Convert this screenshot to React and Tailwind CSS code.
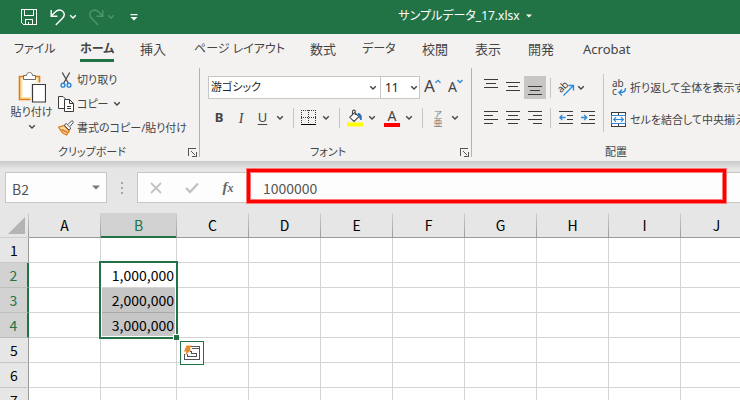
import React from "react";

const TABS = ["ファイル", "ホーム", "挿入", "ページ レイアウト", "数式", "データ", "校閲", "表示", "開発", "Acrobat"];
const KANA_TABS = ["ファイル", "ホーム", "ページ レイアウト", "データ"];
const COLUMNS = ["A", "B", "C", "D", "E", "F", "G", "H", "I", "J"];
const ROWS = [1, 2, 3, 4, 5, 6, 7];
const VALUES = { 2: "1,000,000", 3: "2,000,000", 4: "3,000,000" };

function Chevron({ className = "" }) {
  return (
    <svg className={className} width="8" height="6" viewBox="0 0 8 6" fill="none" stroke="currentColor" strokeWidth="1.4">
      <path d="M1.2 1.3 L4 4 L6.8 1.3" />
    </svg>
  );
}

function ChevronButton({ label, className = "w-3.5" }) {
  return (
    <button aria-label={label} className={`flex h-5 shrink-0 items-center justify-center ${className}`}>
      <Chevron />
    </button>
  );
}

function Launcher({ label }) {
  return (
    <button aria-label={label} className="absolute right-[3px] bottom-1">
      <svg width="9" height="9" viewBox="0 0 9 9" fill="none" stroke="#555" shapeRendering="crispEdges">
        <path d="M0.5 8 V0.5 H8" />
        <path d="M3 3 L7.5 7.5 M8.5 4 V8.5 H4" />
      </svg>
    </button>
  );
}

function Separator() {
  return <span className="mr-[5px] ml-1.5 h-5 w-px shrink-0 bg-[#c8c6c4]" />;
}

function Lines({ rows }) {
  return (
    <svg width="14" height="14" viewBox="0 0 14 14" stroke="#3b3b3b" shapeRendering="crispEdges">
      {rows.map(([y, a, b]) => (
        <path key={y} d={`M${a} ${y + 0.5} H${b}`} />
      ))}
    </svg>
  );
}

function TitleBar() {
  return (
    <header className="relative flex h-[34px] shrink-0 items-center bg-[#217346] text-white">
      <button aria-label="上書き保存" className="ml-[21px]">
        <svg width="16" height="16" viewBox="0 0 16 16" fill="none" stroke="currentColor" shapeRendering="crispEdges">
          <path d="M0.5 0.5 H15.5 V15.5 H2.5 L0.5 13.5 Z M3.5 0.5 V6.5 H12.5 V0.5 M4.5 15.5 V10.5 H11.5 V15.5 M7.5 13 V15" />
        </svg>
      </button>
      <button aria-label="元に戻す" className="ml-[13px]">
        <svg width="16" height="17" viewBox="0 0 16 17" fill="none" stroke="currentColor" strokeWidth="1.4">
          <path d="M1.2 1 V7.2 H7.4 M1.5 6.8 L5.5 2.8 C8 0.3 11 0.5 12.8 2.4 C14.7 4.4 14.5 7.2 12.5 9.2 L5.8 16" />
        </svg>
      </button>
      <ChevronButton label="元に戻すの一覧" />
      <button aria-label="やり直し" className="ml-2 text-[#4f9470]">
        <svg width="16" height="17" viewBox="0 0 16 17" fill="none" stroke="currentColor" strokeWidth="1.4">
          <path d="M14.8 1 V7.2 H8.6 M14.5 6.8 L10.5 2.8 C8 0.3 5 0.5 3.2 2.4 C1.3 4.4 1.5 7.2 3.5 9.2 L10.2 16" />
        </svg>
      </button>
      <span className="text-[#4f9470]">
        <ChevronButton label="やり直しの一覧" />
      </span>
      <button aria-label="クイック アクセスのユーザー設定" className="ml-3">
        <svg width="8" height="7" viewBox="0 0 8 7" fill="currentColor">
          <path d="M0.5 0 H7.5 V1.2 H0.5 Z M0.5 3 H7.5 L4 6.5 Z" />
        </svg>
      </button>
      <div className="absolute inset-x-0 top-0 flex h-8 items-center justify-center pl-[190px] text-[12px]">
        <button className="flex items-center gap-1.5">
          <span>サンプルデータ_17.xlsx</span>
          <svg width="6" height="4" viewBox="0 0 6 4" fill="currentColor">
            <path d="M0 0.5 H6 L3 3.5 Z" />
          </svg>
        </button>
      </div>
    </header>
  );
}

function Tabs() {
  return (
    <nav className="grid h-[30px] shrink-0 grid-cols-[66px_60px_54px_116px_52px_60px_53px_53px_55px_auto] justify-start pl-3.5">
      {TABS.map((t) => (
        <button
          key={t}
          className={KANA_TABS.includes(t)
            ? "flex h-7 items-start justify-start pt-[5px] text-[12px] leading-5 whitespace-nowrap"
            : "flex h-7 items-start justify-start pt-[5px] text-[13px] leading-5 whitespace-nowrap"}
        >
          {t === "ホーム" ? (
            <span className="border-b-3 border-[#217346] font-bold">{t}</span>
          ) : (
            <span>{t}</span>
          )}
        </button>
      ))}
    </nav>
  );
}

function ClipboardGroup() {
  return (
    <section className="relative flex w-[200px] shrink-0 flex-col">
      <div className="flex pt-1">
        <button className="ml-[5px] flex w-[53px] flex-col items-center pt-[3px]">
          <svg width="28" height="32" viewBox="0 0 28 32" fill="none">
            <path d="M1.5 5.5 H21.5 V28.5 H1.5 Z" fill="#fbe3a5" stroke="#e07b15" strokeWidth="1.6" />
            <path d="M4.5 7 H18.5 V26 H4.5 Z" fill="#fff" />
            <path d="M5.5 8.5 V4.5 H8.5 C8.5 0.5 14.5 0.5 14.5 4.5 H17.5 V8.5 Z" fill="#fff" stroke="#6b6b6b" />
            <path d="M12.5 11.5 H28 V32 H12.5 Z" fill="#f3f2f1" />
            <path d="M14.5 13.5 H27.5 V31 H14.5 Z" fill="#fff" stroke="#3b3b3b" strokeWidth="1.2" />
          </svg>
          <span className="leading-[18px]">貼り付け</span>
          <Chevron className="mt-[3px]" />
        </button>
        <div className="flex flex-col">
          <button className="flex h-6 items-center gap-[3px]">
            <svg width="16" height="16" viewBox="0 0 16 16" fill="none">
              <path d="M4.3 0.5 L10.5 11.5 M11.7 0.5 L5.5 11.5" stroke="#4a4a4a" strokeWidth="1.3" />
              <circle cx="5" cy="13.2" r="1.9" stroke="#2b88d8" strokeWidth="1.4" />
              <circle cx="11" cy="13.2" r="1.9" stroke="#2b88d8" strokeWidth="1.4" />
            </svg>
            切り取り
          </button>
          <div className="flex h-6 items-center">
            <button className="flex w-[52px] items-center gap-[3px] whitespace-nowrap">
              <svg className="shrink-0" width="16" height="16" viewBox="0 0 16 16" fill="#fff" stroke="#3b3b3b">
                <path d="M6 12.5 H0.5 V0.5 H5 L7.5 3" />
                <path d="M6.5 3.5 H11.5 L15.5 7.5 V15.5 H6.5 Z M11.5 3.5 V7.5 H15.5 M9 10.5 H13 M9 12.5 H13" />
              </svg>
              コピー
            </button>
            <ChevronButton label="コピーの種類" />
          </div>
          <button className="flex h-6 items-center gap-[3px] whitespace-nowrap">
            <svg width="16" height="16" viewBox="0 0 16 16" fill="none">
              <path d="M0.8 7.2 L6 5.5 L11.2 11 L8.5 15 C5.5 13.8 2.5 11 0.8 7.2 Z" fill="#fbd9b0" stroke="#e07b15" strokeWidth="1.3" />
              <path d="M3.5 9.5 L9.5 12.5" stroke="#e07b15" strokeWidth="1.5" />
              <path d="M6.2 5.2 L8.2 3.5 L12.8 8 L11.2 10.2 Z" fill="#fff" stroke="#4a4a4a" />
              <path d="M9.8 4.6 L13.5 0.9 C14.8 0.6 15.6 1.5 15.2 2.6 L11.8 6.6" fill="#fff" stroke="#4a4a4a" />
            </svg>
            書式のコピー/貼り付け
          </button>
        </div>
      </div>
      <div className="absolute inset-x-0 bottom-0 flex h-[18px] items-center justify-center pr-4">クリップボード</div>
      <Launcher label="クリップボードの設定" />
      <span className="absolute top-1 right-0 bottom-1 w-px bg-[#b5b3b1]" />
    </section>
  );
}

function FontGroup() {
  return (
    <section className="relative flex w-[272px] shrink-0 flex-col pt-3 pl-2">
      <div className="flex h-[23px] items-center">
        <label className="relative h-full">
          <select aria-label="フォント" className="h-full w-[173px] appearance-none border border-[#c8c6c4] bg-white pl-0.5 text-[11px] text-[#222]">
            <option>游ゴシック</option>
          </select>
          <Chevron className="pointer-events-none absolute top-[9px] right-1" />
        </label>
        <label className="relative -ml-px h-full">
          <select aria-label="フォント サイズ" className="h-full w-10 appearance-none border border-[#c8c6c4] bg-white pl-1 text-[12px] text-[#222]">
            <option>11</option>
          </select>
          <Chevron className="pointer-events-none absolute top-[9px] right-0.5" />
        </label>
        <button aria-label="フォント サイズの拡大" className="ml-1 flex h-6 w-[22px] items-start">
          <span className="text-[17px] leading-5">A</span>
          <svg className="mt-[3px]" width="6" height="5" viewBox="0 0 6 5" fill="none" stroke="#2b88d8" strokeWidth="1.3">
            <path d="M0.5 3.8 L3 1.3 L5.5 3.8" />
          </svg>
        </button>
        <button aria-label="フォント サイズの縮小" className="ml-0.5 flex h-6 items-start">
          <span className="text-[14px] leading-[22px]">A</span>
          <svg className="mt-[3px]" width="6" height="5" viewBox="0 0 6 5" fill="none" stroke="#2b88d8" strokeWidth="1.3">
            <path d="M0.5 1 L3 3.5 L5.5 1" />
          </svg>
        </button>
      </div>
      <div className="mt-2 flex h-[22px] items-center">
        <button className="w-[22px] text-[13px] font-bold">B</button>
        <button className="w-[22px] font-['Liberation_Serif',serif] text-[14px] italic">I</button>
        <button className="w-[21px] text-[13px] underline underline-offset-2">U</button>
        <ChevronButton label="下線の種類" />
        <Separator />
        <button aria-label="罫線" className="flex w-5 justify-center">
          <svg width="16" height="16" viewBox="0 0 16 16" stroke="#3b3b3b" fill="none" shapeRendering="crispEdges">
            <path strokeDasharray="1 1" d="M0 0.5 H15 M0 7.5 H15 M0.5 0 V13 M7.5 0 V13 M14.5 0 V13" />
            <path d="M0 14.5 H15" stroke="#000" />
          </svg>
        </button>
        <ChevronButton label="罫線の種類" />
        <Separator />
        <button aria-label="塗りつぶしの色" className="flex w-5 justify-center">
          <svg width="16" height="18" viewBox="0 0 16 18" fill="none">
            <path d="M7.5 3.5 L12 7.5 L7 12.5 L2.8 8.3 L8.5 2.6 M5.5 5.5 V2.5 C5.5 0.6 8.3 0.6 8.3 2.5 V6" fill="#fff" stroke="#4a4a4a" strokeWidth="1.1" />
            <path d="M11 4.5 C13.5 4.5 14.8 6.5 14 11 C12.5 9.5 12.8 7.5 11 4.5 Z" fill="#1f6fb5" stroke="#1f6fb5" />
            <path d="M0 13.5 H16 V17.5 H0 Z" fill="#ff0" />
          </svg>
        </button>
        <ChevronButton label="塗りつぶしの色の一覧" />
        <button aria-label="フォントの色" className="ml-[3px] flex w-5 flex-col items-center">
          <span className="h-3.5 text-[14px] leading-[14px]">A</span>
          <span className="h-1 w-4 bg-[#f00]" />
        </button>
        <ChevronButton label="フォントの色の一覧" />
        <Separator />
        <button aria-label="ふりがな" className="flex w-5 flex-col items-center text-[#777]">
          <span className="text-[8px] leading-[9px]">ア</span>
          <span className="text-[9px] leading-[10px]">亜</span>
        </button>
        <ChevronButton label="ふりがなの設定" />
      </div>
      <div className="absolute inset-x-0 bottom-0 flex h-[18px] items-center justify-center pr-4">フォント</div>
      <Launcher label="フォントの設定" />
      <span className="absolute top-1 right-0 bottom-1 w-px bg-[#b5b3b1]" />
    </section>
  );
}

function AlignmentGroup() {
  return (
    <section className="relative flex min-w-0 flex-1 overflow-hidden pl-2">
      <div className="flex shrink-0 flex-col gap-2 pt-3">
        <div className="flex h-[23px] items-center">
          <button aria-label="上揃え" className="flex h-full w-[22px] justify-center pt-[3px]">
            <Lines rows={[[0, 0, 14], [4, 2, 12], [8, 0, 14]]} />
          </button>
          <button aria-label="上下中央揃え" className="flex h-full w-[22px] justify-center pt-1.5">
            <Lines rows={[[0, 0, 14], [4, 2, 12], [8, 0, 14]]} />
          </button>
          <button aria-label="下揃え" className="flex h-full w-[22px] justify-center bg-[#c8c6c4] pt-2.5">
            <Lines rows={[[0, 0, 14], [4, 2, 12], [8, 0, 14]]} />
          </button>
          <span className="mx-1 h-5 w-px bg-[#c8c6c4]" />
          <button aria-label="方向" className="flex w-[21px] justify-center">
            <svg className="overflow-visible" width="18" height="18" viewBox="0 0 18 18" fill="none">
              <text x="0" y="11" transform="rotate(-45 6 8)" fontSize="10" fill="#444">ab</text>
              <path d="M6.5 16.5 L16 7 M11.5 6.5 H16.5 V11.5" stroke="#2b88d8" strokeWidth="1.3" />
            </svg>
          </button>
          <ChevronButton label="方向の一覧" className="w-2.5" />
        </div>
        <div className="flex h-[22px] items-center">
          <button aria-label="左揃え" className="flex w-[22px] justify-center">
            <Lines rows={[[0, 0, 14], [4, 0, 9], [8, 0, 14], [12, 0, 9]]} />
          </button>
          <button aria-label="中央揃え" className="flex w-[22px] justify-center">
            <Lines rows={[[0, 0, 14], [4, 2, 12], [8, 0, 14], [12, 2, 12]]} />
          </button>
          <button aria-label="右揃え" className="flex w-[22px] justify-center">
            <Lines rows={[[0, 0, 14], [4, 5, 14], [8, 0, 14], [12, 5, 14]]} />
          </button>
          <span className="mx-1 h-5 w-px bg-[#c8c6c4]" />
          <button aria-label="インデントを減らす" className="flex w-[22px] justify-center">
            <svg width="14" height="14" viewBox="0 0 14 14" fill="none" stroke="#3b3b3b">
              <path shapeRendering="crispEdges" d="M0 0.5 H14 M8 4.5 H14 M8 8.5 H14 M0 12.5 H14" />
              <path stroke="#2b88d8" strokeWidth="1.3" d="M6.5 6.5 H0.8 M3.3 4 L0.8 6.5 L3.3 9" />
            </svg>
          </button>
          <button aria-label="インデントを増やす" className="flex w-[22px] justify-center">
            <svg width="14" height="14" viewBox="0 0 14 14" fill="none" stroke="#3b3b3b">
              <path shapeRendering="crispEdges" d="M0 0.5 H14 M8 4.5 H14 M8 8.5 H14 M0 12.5 H14" />
              <path stroke="#2b88d8" strokeWidth="1.3" d="M0 6.5 H5.7 M3.2 4 L5.7 6.5 L3.2 9" />
            </svg>
          </button>
        </div>
      </div>
      <span className="mt-2.5 mr-[7px] ml-1 h-[58px] w-px shrink-0 bg-[#c8c6c4]" />
      <div className="flex min-w-0 flex-col pt-2 whitespace-nowrap">
        <button className="flex h-8 items-center gap-[3px]">
          <svg className="shrink-0 overflow-visible" width="16" height="18" viewBox="0 0 16 18" fill="none">
            <text x="1" y="8" fontSize="10" fill="#444">ab</text>
            <text x="1" y="16" fontSize="10" fill="#444">c</text>
            <path d="M14.5 9 C14.5 12.5 13 13.5 8 13.5 M11 10.5 L8 13.5 L11 16.5" stroke="#2b88d8" strokeWidth="1.4" />
          </svg>
          折り返して全体を表示する
        </button>
        <button className="flex h-8 items-center gap-[3px]">
          <svg className="shrink-0" width="16" height="16" viewBox="0 0 16 16" fill="none">
            <path shapeRendering="crispEdges" d="M0.5 0.5 H14.5 V14.5 H0.5 Z M7.5 0.5 V4 M7.5 11 V14.5" fill="#fff" stroke="#3b3b3b" />
            <path shapeRendering="crispEdges" d="M0.5 3.5 H14.5 V11.5 H0.5 Z" fill="#fff" stroke="#2b88d8" />
            <path d="M2.5 7.5 H12.5 M5 5.2 L2.7 7.5 L5 9.8 M10 5.2 L12.3 7.5 L10 9.8" stroke="#2b88d8" strokeWidth="1.2" />
          </svg>
          セルを結合して中央揃え
        </button>
      </div>
      <div className="absolute bottom-0 left-0 flex h-[18px] w-72 items-center justify-center">配置</div>
    </section>
  );
}

function FormulaBar() {
  return (
    <div className="relative flex h-[52px] shrink-0 bg-[linear-gradient(#c9c9c9,#e6e6e6_8px)] pt-[11px] pl-[5px] font-['Noto_Sans_CJK_JP',sans-serif]">
      <div className="flex h-[31px] w-[102px] items-center border border-[#c6c6c6] bg-[#fdfdfd] pr-1.5">
        <input aria-label="名前ボックス" defaultValue="B2" className="w-full min-w-0 bg-transparent pt-1 pl-1.5 text-[14px] text-[#555] outline-none" />
        <button aria-label="名前の一覧">
          <svg width="8" height="5" viewBox="0 0 8 5" fill="#777">
            <path d="M0 0.5 H8 L4 4.5 Z" />
          </svg>
        </button>
      </div>
      <svg className="mt-2.5 mr-3.5 ml-3.5" width="2" height="12" fill="#a8a8a8" shapeRendering="crispEdges">
        <path d="M0 0 H2 V2 H0 Z M0 5 H2 V7 H0 Z M0 10 H2 V12 H0 Z" />
      </svg>
      <div className="flex h-[31px] min-w-0 flex-1 items-center border border-r-0 border-[#c6c6c6] bg-[#fdfdfd]">
        <button aria-label="キャンセル" className="flex w-9 shrink-0 justify-center">
          <svg width="12" height="12" viewBox="0 0 12 12" stroke="#c2c2c2" strokeWidth="1.8">
            <path d="M1 1 L11 11 M11 1 L1 11" />
          </svg>
        </button>
        <button aria-label="入力" className="flex w-9 shrink-0 justify-center">
          <svg width="14" height="12" viewBox="0 0 14 12" fill="none" stroke="#c2c2c2" strokeWidth="2.4">
            <path d="M1 6 L5 10 L13 1.5" />
          </svg>
        </button>
        <button aria-label="関数の挿入" className="w-9 shrink-0 font-['Liberation_Serif',serif] text-[15px] leading-5 font-bold text-[#666] italic">
          f<span className="text-[12px]">x</span>
        </button>
        <input aria-label="数式バー" defaultValue="1000000" className="h-full min-w-0 flex-1 bg-transparent pl-[17px] text-[14px] text-[#555] outline-none" />
      </div>
      <div className="pointer-events-none absolute top-2 right-3.5 left-[247px] h-[34px] border-3 border-[#f00] shadow-[0_0_0_1px_#f77,inset_0_0_0_1px_#f77]" />
    </div>
  );
}

function Selection() {
  return (
    <div className="pointer-events-none absolute -top-0.5 -left-0.5 z-10 h-[78px] w-[79px] border-2 border-[#217346] shadow-[inset_0_0_0_1px_#fff]">
      <span className="absolute -right-[3px] -bottom-[3px] size-1.5 border-t border-l border-white bg-[#217346]" />
      <button aria-label="クイック分析" className="pointer-events-auto absolute top-[78px] left-[79px] size-6 border border-[#217346] bg-white">
        <svg width="22" height="22" viewBox="0 0 22 22" fill="none">
          <g stroke="#555" shapeRendering="crispEdges">
            <path d="M10 4.5 H18.5 V17.5 H3.5 V12 M11 6.5 H18" />
            <path d="M9 9.5 H10.5 V11.5 H15.5 V14.5 H6.5 V12" />
          </g>
          <path d="M5.5 3.5 H10.5 L8.5 7.5 H10.5 L4 13.5 L5.5 9.5 H3 Z" fill="#e88a2a" />
        </svg>
      </button>
    </div>
  );
}

function Sheet() {
  return (
    <main className="min-h-0 flex-1 overflow-hidden bg-white font-['Noto_Sans_CJK_JP',sans-serif]">
      <table className="w-[753px] table-fixed border-separate border-spacing-0 text-[14px] leading-5 text-black">
        <colgroup>
          <col className="w-[29px]" />
          {COLUMNS.map((c) => (
            <col key={c} className={c === "B" ? "w-[76px]" : "w-[72px]"} />
          ))}
        </colgroup>
        <thead>
          <tr className="h-[25px]">
            <td className="border-b border-[#cfcfcf] bg-[linear-gradient(#d0d0d0,#999)] p-0 pr-px">
              <div className="flex h-6 items-center justify-end bg-[#e6e6e6] pr-[3px]">
                <svg width="17" height="17" viewBox="0 0 17 17" fill="#b4b4b4">
                  <path d="M17 0 V17 H0 Z" />
                </svg>
              </div>
            </td>
            {COLUMNS.map((c) => (
              <th key={c} scope="col" className="bg-[linear-gradient(#d0d0d0,#999)] p-0 pr-px font-normal">
                <div className={c === "B"
                  ? "h-[25px] border-b-2 border-[#217346] bg-[#d2d2d2] pt-0.5 text-[#217346]"
                  : "h-[25px] border-b border-[#999] bg-[#e6e6e6] pt-0.5"}
                >
                  {c}
                </div>
              </th>
            ))}
          </tr>
        </thead>
        <tbody>
          {ROWS.map((r) => (
            <tr key={r} className="h-[25px]">
              <th
                scope="row"
                className={VALUES[r]
                  ? "border-r-2 border-b border-r-[#217346] border-b-[#bdbdbd] bg-[#d2d2d2] p-0 font-normal text-[#217346]"
                  : "border-r border-b border-r-[#999] border-b-[#c6c6c6] bg-[#e6e6e6] p-0 font-normal"}
              >
                {r}
              </th>
              {COLUMNS.map((c) => {
                const value = c === "B" ? VALUES[r] : undefined;
                return (
                  <td
                    key={c}
                    className={value && r > 2
                      ? "border-r border-b border-r-[#d4d4d4] border-b-[#aaa] bg-[#c6c6c6] p-0 pr-0.5 text-right"
                      : "relative border-r border-b border-[#d4d4d4] p-0 pr-0.5 text-right"}
                  >
                    {value}
                    {c === "B" && r === 2 && <Selection />}
                  </td>
                );
              })}
            </tr>
          ))}
        </tbody>
      </table>
    </main>
  );
}

export default function App() {
  return (
    <div className="flex h-screen flex-col overflow-hidden bg-[#f3f2f1] font-['Noto_Sans','Noto_Sans_CJK_JP',sans-serif] text-[11px] text-[#444] [font-feature-settings:'palt']">
      <TitleBar />
      <Tabs />
      <div className="flex h-[97px] shrink-0">
        <ClipboardGroup />
        <FontGroup />
        <AlignmentGroup />
      </div>
      <FormulaBar />
      <Sheet />
    </div>
  );
}
